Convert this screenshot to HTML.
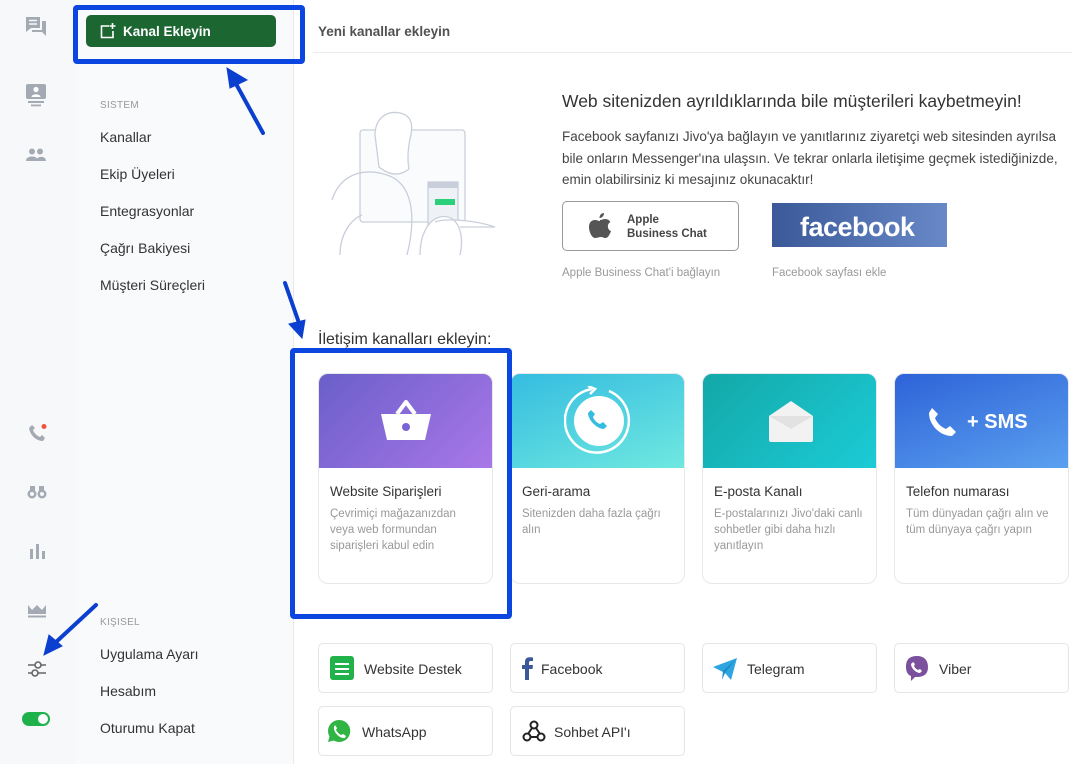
<!DOCTYPE html>
<html><head><meta charset="utf-8"><style>
*{margin:0;padding:0;box-sizing:border-box}
body{width:1072px;height:764px;overflow:hidden;position:relative;background:#fff;font-family:"Liberation Sans",sans-serif;color:#333}
.a{position:absolute}
.ib{position:absolute;left:0;top:0;width:76px;height:764px;background:#f7f8fa}
.sb{position:absolute;left:76px;top:0;width:218px;height:764px;background:#f9fafc;border-right:1px solid #e6e8ec}
.nav{position:absolute;left:100px;font-size:14px;color:#333}
.sec{position:absolute;left:100px;font-size:10px;color:#999;letter-spacing:.3px}
.hl{position:absolute;border:5px solid #0b46e0;border-radius:4px}
.card{position:absolute;top:373px;width:175px;height:211px;border:1px solid #e6e8ec;border-radius:10px;overflow:hidden;background:#fff}
.card .img{height:94px;position:relative}
.card h4{font-weight:normal;font-size:13.5px;color:#333;margin:16px 0 0 11px}
.card p{font-size:11.5px;color:#999;margin:7px 10px 0 11px;line-height:16px}
.btn{position:absolute;width:175px;height:50px;border:1px solid #e3e5e9;border-radius:5px;background:#fff;font-size:14px;color:#333}
.btn span{position:absolute;top:17px}
.btn svg{position:absolute}
</style></head><body>
<div class="ib"></div>
<div class="sb"></div>
<svg class="a" style="left:25px;top:16px" width="22" height="22" viewBox="0 0 22 22"><path d="M1 1h14v11H6l-5 4z" fill="#a4aab3"/><path d="M17 5h4v15l-4-4H7v-2h10z" fill="#a4aab3"/><path d="M4 4.5h8M4 8h8" stroke="#f7f8fa" stroke-width="1.4"/></svg>
<svg class="a" style="left:26px;top:84px" width="20" height="23" viewBox="0 0 20 23"><rect x="0" y="0" width="20" height="15" rx="2" fill="#a4aab3"/><circle cx="10" cy="5.5" r="2.6" fill="#fff"/><path d="M5.5 13c0-3.5 9-3.5 9 0z" fill="#fff"/><rect x="2" y="17" width="16" height="2" fill="#a4aab3"/><rect x="5" y="20.5" width="10" height="1.8" fill="#a4aab3"/></svg>
<svg class="a" style="left:26px;top:148px" width="20" height="14" viewBox="0 0 20 14"><circle cx="6" cy="3.5" r="3" fill="#a4aab3"/><circle cx="14" cy="3.5" r="3" fill="#a4aab3"/><path d="M0 13c0-6 12-6 12 0zM10 13c0-5 10-6 10 0z" fill="#a4aab3"/></svg>
<svg class="a" style="left:29px;top:424px" width="18" height="18" viewBox="0 0 18 18"><path d="M3 1l3 3-2 2c1 3 4 6 7 7l2-2 3 3-2 3C7 17 1 11 0 4z" fill="#a4aab3"/><circle cx="15" cy="2.5" r="2.5" fill="#f0533b"/></svg>
<svg class="a" style="left:27px;top:485px" width="20" height="14" viewBox="0 0 20 14"><circle cx="5" cy="9" r="4.5" fill="#a4aab3"/><circle cx="15" cy="9" r="4.5" fill="#a4aab3"/><rect x="3" y="1" width="5" height="6" fill="#a4aab3"/><rect x="12" y="1" width="5" height="6" fill="#a4aab3"/><circle cx="5" cy="9" r="2" fill="#f7f8fa"/><circle cx="15" cy="9" r="2" fill="#f7f8fa"/></svg>
<svg class="a" style="left:29px;top:543px" width="16" height="16" viewBox="0 0 16 16"><rect x="1" y="6" width="3" height="10" fill="#a4aab3"/><rect x="7" y="1" width="3" height="15" fill="#a4aab3"/><rect x="13" y="8" width="3" height="8" fill="#a4aab3"/></svg>
<svg class="a" style="left:28px;top:604px" width="18" height="14" viewBox="0 0 18 14"><path d="M0 1l4 5 5-5 5 5 4-5v9H0z" fill="#a4aab3"/><rect y="11.5" width="18" height="2" fill="#a4aab3"/></svg>
<svg class="a" style="left:27px;top:660px" width="20" height="18" viewBox="0 0 20 18"><path d="M1 5h18M1 13h18" stroke="#666" stroke-width="1.6"/><circle cx="11" cy="5" r="3" fill="#f7f8fa" stroke="#666" stroke-width="1.6"/><circle cx="8" cy="13" r="3" fill="#f7f8fa" stroke="#666" stroke-width="1.6"/></svg>
<div class="a" style="left:22px;top:712px;width:28px;height:14px;border-radius:7px;background:#1fb24a"><div class="a" style="left:16px;top:2px;width:10px;height:10px;border-radius:50%;background:#fff"></div></div>

<div class="a" style="left:86px;top:15px;width:190px;height:32px;background:#1c6632;border-radius:5px;color:#fff;font-weight:bold;font-size:13.5px">
<svg class="a" style="left:14px;top:8px" width="16" height="16" viewBox="0 0 16 16"><path d="M9 3H1.5v11.5H13V8" fill="none" stroke="#fff" stroke-width="1.6"/><path d="M12.5 0v6M9.5 3h6" stroke="#fff" stroke-width="1.6"/></svg>
<span class="a" style="left:37px;top:9px">Kanal Ekleyin</span></div>
<div class="hl" style="left:73px;top:5px;width:232px;height:59px"></div>
<div class="sec" style="top:100px">SISTEM</div>
<div class="nav" style="top:129px">Kanallar</div>
<div class="nav" style="top:166px">Ekip Üyeleri</div>
<div class="nav" style="top:203px">Entegrasyonlar</div>
<div class="nav" style="top:240px">Çağrı Bakiyesi</div>
<div class="nav" style="top:277px">Müşteri Süreçleri</div>
<div class="sec" style="top:617px">KIŞISEL</div>
<div class="nav" style="top:646px">Uygulama Ayarı</div>
<div class="nav" style="top:683px">Hesabım</div>
<div class="nav" style="top:720px">Oturumu Kapat</div>

<div class="a" style="left:318px;top:24px;font-size:13.5px;color:#333;font-weight:bold;opacity:.85">Yeni kanallar ekleyin</div>
<div class="a" style="left:313px;top:52px;width:759px;height:1px;background:#e9ebee"></div>

<svg class="a" style="left:330px;top:105px" width="180" height="150" viewBox="0 0 180 150" fill="none" stroke="#c9cfda" stroke-width="1.3">
<rect x="30" y="25" width="105" height="92" rx="3" fill="#fafbfd"/>
<path d="M45 30c0-15 10-25 25-22s12 18 10 26c-2 10-3 20-1 30-10 8-20 6-30-2z" fill="#fff"/>
<path d="M2 95c8-25 30-33 55-25s30 40 20 80M10 150c0-20 10-35 22-40" fill="none"/>
<rect x="98" y="77" width="30" height="45" fill="#eef1f5"/>
<rect x="98" y="77" width="30" height="6" fill="#c9cfda" stroke="none"/>
<rect x="105" y="94" width="20" height="6" fill="#2bd07a" stroke="none"/>
<path d="M90 150c0-20 8-35 20-38 18-4 25 18 20 38M105 117c10-4 40-2 60 5H130" fill="#fff"/>
</svg>

<div class="a" style="left:562px;top:91px;font-size:17.5px;color:#333;white-space:nowrap">Web sitenizden ayrıldıklarında bile müşterileri kaybetmeyin!</div>
<div class="a" style="left:562px;top:126px;font-size:13.5px;color:#444;line-height:21.5px;white-space:nowrap">Facebook sayfanızı Jivo'ya bağlayın ve yanıtlarınız ziyaretçi web sitesinden ayrılsa<br>bile onların Messenger'ına ulaşsın. Ve tekrar onlarla iletişime geçmek istediğinizde,<br>emin olabilirsiniz ki mesajınız okunacaktır!</div>
<div class="a" style="left:562px;top:201px;width:177px;height:50px;border:1px solid #999;border-radius:5px">
<svg class="a" style="left:26px;top:11px" width="22" height="26" viewBox="0 0 22 26"><path d="M15 0c0 3-2 5-4.5 5 0-3 2-5 4.5-5zM11 7c2 0 3-1 5-1 3 0 5 2 5.5 3-4 2-3 8 .5 9-1 3-3 7-5.5 7-2 0-2.5-1-4.5-1S8 25 6 25c-3 0-6-6-6-11 0-5 3-7 6-7 2 0 3.5 1 5 1z" fill="#555"/></svg>
<div class="a" style="left:64px;top:11px;font-size:11.5px;font-weight:bold;color:#444;line-height:14px">Apple<br>Business Chat</div></div>
<div class="a" style="left:772px;top:203px;width:175px;height:44px;background:linear-gradient(90deg,#3b5998,#6888c8);color:#fff;font-weight:bold;font-size:27px;letter-spacing:-.5px"><span class="a" style="left:28px;top:9px">facebook</span></div>
<div class="a" style="left:562px;top:267px;font-size:11.5px;color:#999">Apple Business Chat'i bağlayın</div>
<div class="a" style="left:772px;top:267px;font-size:11.5px;color:#999">Facebook sayfası ekle</div>

<div class="a" style="left:318px;top:331px;font-size:16px;color:#333">İletişim kanalları ekleyin:</div>

<div class="card" style="left:318px"><div class="img" style="background:linear-gradient(135deg,#6a5fc9,#a977e8)">
<svg class="a" style="left:62px;top:26px" width="50" height="42" viewBox="0 0 50 42"><path d="M16 14L25 2l9 12" fill="none" stroke="#fff" stroke-width="4" stroke-linejoin="round"/><path d="M0 14h50l-6 26H6z" fill="#fff"/><circle cx="25" cy="27" r="4" fill="#7a63d6"/></svg></div>
<h4>Website Siparişleri</h4><p>Çevrimiçi mağazanızdan veya web formundan siparişleri kabul edin</p></div>
<div class="card" style="left:510px"><div class="img" style="background:linear-gradient(160deg,#35bde0,#6fe8e0)">
<svg class="a" style="left:53px;top:12px" width="70" height="70" viewBox="0 0 70 70"><path d="M28 3A32 32 0 1 0 45 5" fill="none" stroke="#fff" stroke-width="2.5"/><path d="M24 0l7 3-5 5" fill="none" stroke="#fff" stroke-width="2.5"/><circle cx="35" cy="35" r="25" fill="#fff"/><path d="M27 24l4 4-2 3c1 3 4 6 7 7l3-2 4 4-3 3c-7 0-16-9-16-16z" fill="#35bde0"/></svg></div>
<h4>Geri-arama</h4><p>Sitenizden daha fazla çağrı alın</p></div>
<div class="card" style="left:702px"><div class="img" style="background:linear-gradient(135deg,#13a8a8,#1ccbd6)">
<svg class="a" style="left:66px;top:27px" width="44" height="41" viewBox="0 0 44 41"><path d="M0 15L22 0l22 15v24a2 2 0 0 1-2 2H2a2 2 0 0 1-2-2z" fill="#f2f2f2"/><path d="M0 15l22 13 22-13" fill="#e2e2e2"/></svg></div>
<h4>E-posta Kanalı</h4><p>E-postalarınızı Jivo'daki canlı sohbetler gibi daha hızlı yanıtlayın</p></div>
<div class="card" style="left:894px"><div class="img" style="background:linear-gradient(160deg,#2e63d8,#5aa0ef)">
<svg class="a" style="left:34px;top:34px" width="28" height="28" viewBox="0 0 28 28"><path d="M3 0l6 6-3 4c2 5 6 9 11 11l4-3 6 6-4 4C11 28 0 17 0 5z" fill="#fff"/></svg>
<span class="a" style="left:72px;top:37px;color:#fff;font-weight:bold;font-size:20px">+ SMS</span></div>
<h4>Telefon numarası</h4><p>Tüm dünyadan çağrı alın ve tüm dünyaya çağrı yapın</p></div>
<div class="hl" style="left:290px;top:348px;width:222px;height:271px"></div>

<div class="btn" style="left:318px;top:643px"><svg style="left:11px;top:12px" width="24" height="24" viewBox="0 0 24 24"><rect width="24" height="24" rx="3" fill="#22b24c"/><path d="M5 8h14M5 13h14M5 18h14" stroke="#fff" stroke-width="2"/></svg><span style="left:45px">Website Destek</span></div>
<div class="btn" style="left:510px;top:643px"><svg style="left:10px;top:12px" width="12" height="24" viewBox="0 0 12 24"><path d="M8 24V13h3.5l.5-4H8V6.5C8 5.5 8.5 5 10 5h2V1.5C11 1.3 10 1.2 8.5 1.2 5.5 1.2 4 3 4 6v3H1v4h3v11z" fill="#3b5998"/></svg><span style="left:30px">Facebook</span></div>
<div class="btn" style="left:702px;top:643px"><svg style="left:10px;top:14px" width="24" height="22" viewBox="0 0 24 22"><path d="M0 9L24 0l-6 22-6-7z" fill="#2ca5e0"/><path d="M12 15l-3 7 1-9L22 2z" fill="#1b8cc4"/></svg><span style="left:44px">Telegram</span></div>
<div class="btn" style="left:894px;top:643px"><svg style="left:10px;top:12px" width="24" height="26" viewBox="0 0 24 26"><path d="M12 0C5 0 1 3 1 11c0 5 2 8 5 9v5l4-4h2c7 0 11-3 11-10S19 0 12 0z" fill="#7b519d"/><path d="M8 6l2 2-1 2c1 2 2 3 4 4l2-1 2 2-2 2c-4 0-9-5-9-9z" fill="#fff"/></svg><span style="left:44px">Viber</span></div>
<div class="btn" style="left:318px;top:706px"><svg style="left:8px;top:12px" width="24" height="24" viewBox="0 0 24 24"><path d="M12 1a11 11 0 0 0-9.5 16.5L1 23l5.7-1.5A11 11 0 1 0 12 1z" fill="#30b545"/><path d="M8 6l2 3-1 2c1 2 3 4 5 5l2-1 3 2-1 2c-5 1-12-6-11-11z" fill="#fff"/></svg><span style="left:43px">WhatsApp</span></div>
<div class="btn" style="left:510px;top:706px"><svg style="left:11px;top:13px" width="24" height="22" viewBox="0 0 24 22" fill="none" stroke="#222" stroke-width="2"><circle cx="12" cy="5" r="3.5"/><circle cx="5" cy="17" r="3.5"/><circle cx="19" cy="17" r="3.5"/><path d="M10 8l-4 6M14 8l4 6M8.5 17h7"/></svg><span style="left:43px">Sohbet API'ı</span></div>

<svg class="a" style="left:0;top:0" width="1072" height="764" viewBox="0 0 1072 764">
<g fill="#0b3fcf" stroke="#0b3fcf" stroke-linecap="round">
<path d="M263 133L235 82" stroke-width="4"/><path d="M227 68l20 12-17 8z"/>
<path d="M285 283l14 40" stroke-width="4"/><path d="M302 338l-13-14 16-4z"/>
<path d="M96 605L55 643" stroke-width="4"/><path d="M44 655l5-20 13 11z"/>
</g></svg>
</body></html>
